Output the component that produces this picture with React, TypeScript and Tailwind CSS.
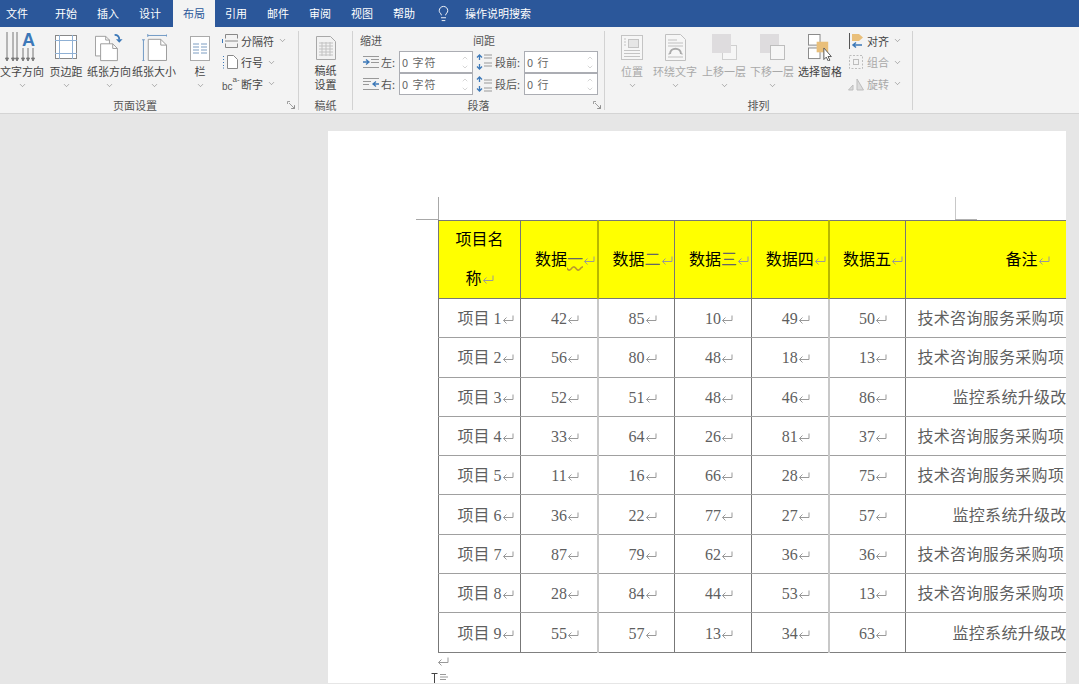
import { ChevronDown, ChevronUp, Lightbulb } from "lucide-react";
import type { ReactNode } from "react";

const tabs = ["开始", "插入", "设计"];
const tabsRight = ["引用", "邮件", "审阅", "视图", "帮助"];

const rows = [
  ["项目 1", "42", "85", "10", "49", "50", "技术咨询服务采购项目"],
  ["项目 2", "56", "80", "48", "18", "13", "技术咨询服务采购项目"],
  ["项目 3", "52", "51", "48", "46", "86", "监控系统升级改造"],
  ["项目 4", "33", "64", "26", "81", "37", "技术咨询服务采购项目"],
  ["项目 5", "11", "16", "66", "28", "75", "技术咨询服务采购项目"],
  ["项目 6", "36", "22", "77", "27", "57", "监控系统升级改造"],
  ["项目 7", "87", "79", "62", "36", "36", "技术咨询服务采购项目"],
  ["项目 8", "28", "84", "44", "53", "13", "技术咨询服务采购项目"],
  ["项目 9", "55", "57", "13", "34", "63", "监控系统升级改造"],
];

const Ret = () => (
  <svg viewBox="0 0 12 12" className="inline-block w-[12px] h-[12px] align-[-1px]" fill="none" stroke="#999" strokeWidth="1">
    <path d="M11 2.500v5H1.500M4.500 4.500l-3 3 3 3" />
  </svg>
);

const Chev = () => <ChevronDown className="w-[9px] h-[9px] text-[#777]" strokeWidth={1.5} />;

function BigBtn({ w, icon, label, disabled, noChev }: { w: string; icon: ReactNode; label: ReactNode; disabled?: boolean; noChev?: boolean }) {
  return (
    <div className={`${w} flex-none flex flex-col items-center ${disabled ? "text-[#a9a9a9]" : "text-[#444]"}`}>
      <div className="h-[32px] w-full flex items-end justify-center">{icon}</div>
      <div className="h-[16px] leading-[16px] whitespace-nowrap">{label}</div>
      {!noChev && <div className="h-[12px] flex items-center"><Chev /></div>}
    </div>
  );
}

function SmallBtn({ icon, label, disabled }: { icon: ReactNode; label: string; disabled?: boolean }) {
  return (
    <div className={`h-[21.5px] flex items-center gap-[1px] whitespace-nowrap ${disabled ? "text-[#a9a9a9]" : "text-[#444]"}`}>
      <div className="w-[18px] flex-none">{icon}</div>
      <span>{label}</span>
      <span className="ml-[3px]"><Chev /></span>
    </div>
  );
}

function Group({ className, label, labelClass, launcher, children }: { className: string; label: string; labelClass?: string; launcher?: boolean; children: ReactNode }) {
  return (
    <div className={`relative flex-none flex flex-col border-r border-[#d2d2d2] h-[79px] mt-[4px] ${className}`}>
      <div className="flex-1 flex min-h-0">{children}</div>
      <div className={`h-[17px] leading-[24px] text-center text-[#555] ${labelClass ?? ""}`}>{label}</div>
      {launcher && (
        <svg viewBox="0 0 8 8" className="absolute right-[3px] bottom-[1px] w-[8px] h-[8px]" fill="none" stroke="#8a8a8a">
          <path d="M.5 3V.5H3M7.500 5v2.500H5M2 2l5 5M4 7.500h3.500V4" strokeWidth=".8" />
        </svg>
      )}
    </div>
  );
}

const TextDir = () => (
  <svg viewBox="0 0 36 30" className="w-[36px] h-[30px] mb-[1px]" fill="none" stroke="#777">
    <path d="M3 0v26M9 0v26M13 0v26M19 16v10M24 16v10M29 16v10" />
    <path d="M1.500 26 3 29l1.500-3zM7.500 26 9 29l1.500-3zM11.500 26l1.500 3 1.500-3zM17.500 26l1.500 3 1.500-3zM22.500 26l1.500 3 1.500-3zM27.500 26l1.500 3 1.500-3z" fill="#777" />
    <text x="18" y="14" fontSize="18" fontWeight="700" fill="#3c78b8" stroke="none" fontFamily="Liberation Sans, sans-serif">A</text>
  </svg>
);
const Margins = () => (
  <svg viewBox="0 0 22 24" className="w-[22px] h-[24px] mb-[4px]" fill="#fff" stroke="#888">
    <rect x=".5" y=".5" width="21" height="23" />
    <path d="M4.500 0v24M17.500 0v24M0 5.500h22M0 18.500h22" stroke="#8fb0d4" />
  </svg>
);
const Orient = () => (
  <svg viewBox="0 0 30 30" className="w-[28px] h-[28px] mb-[1px]" fill="#fff" stroke="#999">
    <path d="M.5 2.500h11l4 4v17H.5z" />
    <path d="M6 10.500h13l5 5v13H6z" />
    <path d="M19 10.500v5h5M11.500 2.500v4h4" fill="none" />
    <path d="M21 1c3 0 5 2 5 5" fill="none" stroke="#3c78b8" strokeWidth="2" />
    <path d="M22.500 5.500 26 9.500l3.500-4z" fill="#3c78b8" stroke="none" />
  </svg>
);
const PaperSize = () => (
  <svg viewBox="0 0 26 28" className="w-[25px] h-[27px] mb-[2px]" fill="#fff" stroke="#999">
    <path d="M6.500 5.500h13l6 6v16h-19z" />
    <path d="M19.500 5.500v6h6" fill="none" />
    <path d="M6 1.500h20M6 0v3M26 0v3M1.500 6v22M0 6h3M0 28h3" fill="none" stroke="#6d97c4" />
  </svg>
);
const Columns = () => (
  <svg viewBox="0 0 20 25" className="w-[20px] h-[25px] mb-[2px]" fill="#fff" stroke="#aaa">
    <rect x=".5" y=".5" width="19" height="24" />
    <path d="M3 8h6M11 8h6M3 11h6M11 11h6M3 14h6M11 14h6M3 17h6M11 17h6" stroke="#7d9dc2" />
  </svg>
);
const Gaozhi = () => (
  <svg viewBox="0 0 20 24" className="w-[20px] h-[24px]" fill="#f2f2f2" stroke="#a8a8a8">
    <path d="M.5.500h14l5 5v18H.5z" />
    <path d="M3 7h14M3 10h14M3 13h14M3 16h14M3 19h14M6 6v14M10 6v14M14 6v14" stroke="#c2c2c2" />
  </svg>
);
const Position = () => (
  <svg viewBox="0 0 22 25" className="w-[22px] h-[25px] mb-[3px]" fill="#f6f6f6" stroke="#c4c4c4">
    <rect x=".5" y=".5" width="21" height="24" />
    <rect x="7.500" y="4.500" width="10" height="8" fill="#e6e6e6" />
    <path d="M3 15.500h16M3 18.500h16M3 21.500h16M3 4h2M3 7h2M3 10h2" />
  </svg>
);
const Wrap = () => (
  <svg viewBox="0 0 21 27" className="w-[21px] h-[27px] mb-[2px]" fill="#f6f6f6" stroke="#c0c0c0">
    <path d="M.5.500h15l5 5v21H.5z" />
    <path d="M3 6h9M3 9h15M3 12h15M3 23h15M3 20h2M16 20h2" />
    <path d="M5 20c0-7 11-7 11 0" fill="none" stroke="#aaa" strokeWidth="2" />
  </svg>
);
const LayerUp = () => (
  <svg viewBox="0 0 25 26" className="w-[25px] h-[26px] mb-[3px]" stroke="#cfcfcf">
    <rect x="10.500" y="11.500" width="14" height="14" fill="#f6f6f6" />
    <rect x="0" y="0" width="19" height="19" fill="#dedcde" stroke="none" />
  </svg>
);
const LayerDown = () => (
  <svg viewBox="0 0 25 26" className="w-[25px] h-[26px] mb-[3px]" stroke="#bdbdbd">
    <rect x="0" y="0" width="19" height="19" fill="#dedcde" stroke="none" />
    <rect x="10.500" y="11.500" width="14" height="14" fill="#f6f6f6" />
  </svg>
);
const Pane = () => (
  <svg viewBox="0 0 26 28" className="w-[25px] h-[27px] mb-[2px]" fill="#fff" stroke="#888">
    <rect x=".5" y=".5" width="12" height="11" />
    <rect x=".5" y="14.500" width="12" height="11" />
    <rect x="9" y="8" width="12" height="11" fill="#e9bf7a" stroke="none" />
    <path d="M16.500 14.500v12l2.500-2.500 2 4 1.800-.8-2-3.800h3.500z" fill="#fff" stroke="#555" />
  </svg>
);
const SepIcon = () => (
  <svg viewBox="0 0 16 14" className="w-[16px] h-[14px]" fill="none" stroke="#888">
    <path d="M3.500 4.500V.5h12v4M3.500 9.500v4h12v-4M3 7h13" />
    <path d="M.5 5v4" stroke="#3c78b8" />
  </svg>
);
const LineNum = () => (
  <svg viewBox="0 0 16 14" className="w-[16px] h-[14px]" fill="#fff" stroke="#888">
    <path d="M5.500.5h6l4 4v9h-10z" />
    <path d="M1 1.500h2M1 4.500h2M1 7.500h2M1 10.500h2M1 13h2" stroke="#3c78b8" strokeDasharray="1 1" />
  </svg>
);
const Hyphen = () => (
  <div className="flex items-start h-[16px] font-['Liberation_Sans',sans-serif] text-[#555]">
    <span className="mt-[6px] text-[10px] leading-[10px]">bc</span>
    <span className="text-[8px] leading-[8px]">a-</span>
  </div>
);
const Align = () => (
  <svg viewBox="0 0 16 16" className="w-[16px] h-[16px]">
    <path d="M1.500 0v16" stroke="#555" fill="none" />
    <path d="M4 1h7l4 3.500L11 8H4z" fill="#e9bf7a" />
    <path d="M14 12H6M8 9.500 5 12l3 2.500" fill="none" stroke="#3c78b8" strokeWidth="1.500" />
  </svg>
);
const GroupIcon = () => (
  <svg viewBox="0 0 16 16" className="w-[16px] h-[16px]" fill="none" stroke="#bdbdbd">
    <rect x="1.500" y="1.500" width="13" height="13" strokeDasharray="2 1.500" />
    <rect x="5.500" y="5.500" width="5" height="5" />
  </svg>
);
const Rotate = () => (
  <svg viewBox="0 0 16 14" className="w-[16px] h-[14px]" fill="none" stroke="#bdbdbd">
    <path d="M.5 13 5 8v5zM9 2l6.500 11H9z" fill="#dcdcdc" />
  </svg>
);

const IndentL = () => (
  <svg viewBox="0 0 16 12" className="w-[16px] h-[12px]" fill="none" stroke="#999">
    <path d="M0 .5h16M8 3.500h8M8 6.500h8M0 11.500h16" />
    <path d="M0 6h5M3 3.500 6 6 3 8.500" stroke="#3c78b8" strokeWidth="1.300" />
  </svg>
);
const IndentR = () => (
  <svg viewBox="0 0 16 12" className="w-[16px] h-[12px]" fill="none" stroke="#999">
    <path d="M0 .5h16M0 3.500h8M0 6.500h6M0 11.500h16" />
    <path d="M16 6h-5M13 3.500 10 6l3 2.500" stroke="#3c78b8" strokeWidth="1.300" />
  </svg>
);
const SpaceIcon = ({ flip }: { flip?: boolean }) => (
  <svg viewBox="0 0 16 16" className="w-[16px] h-[16px]" fill="none" stroke="#999">
    <path d={flip ? "M8 4h8M8 7h8M8 12h8M8 15h8" : "M8 1h8M8 4h8M8 9h8M8 12h8"} />
    <path d="M3.500 1v5M1 3.500 3.500 1 6 3.500M3.500 15v-5M1 12.500 3.500 15 6 12.500" stroke="#3c78b8" strokeWidth="1.300" />
  </svg>
);

function Spin({ value, w }: { value: string; w: string }) {
  return (
    <div className={`${w} h-[22px] flex items-center justify-between bg-white border border-[#abadb3] pl-[2px] pr-[3px] text-[#666]`}>
      <span className="tracking-[1px]">{value}</span>
      <div className="flex flex-col text-[#999]">
        <ChevronUp className="w-[8px] h-[8px]" strokeWidth={1.2} />
        <ChevronDown className="w-[8px] h-[8px] mt-[1px]" strokeWidth={1.2} />
      </div>
    </div>
  );
}

function SpinRow({ icon, label, value, labelW, w }: { icon: ReactNode; label: string; value: string; labelW: string; w: string }) {
  return (
    <div className="flex items-center h-[22px]">
      <div className={`flex items-center justify-between ${labelW} text-[#555] pr-[4px]`}>
        {icon}
        <span>{label}</span>
      </div>
      <Spin value={value} w={w} />
    </div>
  );
}

// the lines at 598 and 829 come out paler and wider in the shot
const pale = [false, true, false, false, true, false];

export default function App() {
  return (
    <div className="w-[1079px] h-[684px] overflow-hidden flex flex-col text-[11px] font-['Noto_Sans_CJK_SC',sans-serif] bg-[#e6e6e6]">
      <div className="h-[27px] flex-none bg-[#2b579a] flex items-stretch text-white">
        <div className="w-[45px] pl-[6px] flex items-center">文件</div>
        {tabs.map((t) => (
          <div key={t} className="w-[42px] flex items-center justify-center">{t}</div>
        ))}
        <div className="w-[42px] ml-[2px] bg-[#f3f3f3] text-[#2b579a] flex items-center justify-center">布局</div>
        {tabsRight.map((t) => (
          <div key={t} className="w-[42px] flex items-center justify-center">{t}</div>
        ))}
        <div className="ml-[10px] flex items-center">
          <Lightbulb className="w-[17px] h-[17px]" strokeWidth={1.3} />
          <span className="ml-[13px]">操作说明搜索</span>
        </div>
      </div>

      <div className="h-[87px] flex-none bg-[#f3f3f3] border-b border-[#d4d4d4] flex items-start">
        <Group className="w-[299px]" label="页面设置" labelClass="pr-[28px]" launcher>
          <BigBtn w="w-[44px]" icon={<TextDir />} label="文字方向" />
          <BigBtn w="w-[44px]" icon={<Margins />} label="页边距" />
          <BigBtn w="w-[42px]" icon={<Orient />} label="纸张方向" />
          <BigBtn w="w-[48px]" icon={<PaperSize />} label="纸张大小" />
          <BigBtn w="w-[44px]" icon={<Columns />} label="栏" />
          <div className="-mt-[1px]">
            <SmallBtn icon={<SepIcon />} label="分隔符" />
            <SmallBtn icon={<LineNum />} label="行号" />
            <SmallBtn icon={<Hyphen />} label="断字" />
          </div>
        </Group>
        <Group className="w-[54px]" label="稿纸">
          <div className="w-full flex flex-col items-center text-[#444]">
            <div className="h-[29px] flex items-end"><Gaozhi /></div>
            <div className="mt-[3px] leading-[14px] text-center">稿纸<br />设置</div>
          </div>
        </Group>
        <Group className="w-[252px]" label="段落" launcher>
          <div className="pl-[7px] w-full">
            <div className="flex h-[18px] mb-[2px] items-center text-[#555]">
              <span className="w-[113px]">缩进</span>
              <span>间距</span>
            </div>
            <div className="flex">
              <div>
                <SpinRow icon={<IndentL />} label="左:" value="0 字符" labelW="w-[39px] pl-[3px]" w="w-[74px]" />
                <SpinRow icon={<IndentR />} label="右:" value="0 字符" labelW="w-[39px] pl-[3px]" w="w-[74px]" />
              </div>
              <div>
                <SpinRow icon={<SpaceIcon />} label="段前:" value="0 行" labelW="w-[51px] pl-[3px]" w="w-[74px]" />
                <SpinRow icon={<SpaceIcon flip />} label="段后:" value="0 行" labelW="w-[51px] pl-[3px]" w="w-[74px]" />
              </div>
            </div>
          </div>
        </Group>
        <Group className="w-[308px]" label="排列">
          <div className="w-[5px] flex-none" />
          <BigBtn w="w-[44px]" icon={<Position />} label="位置" disabled />
          <BigBtn w="w-[42px]" icon={<Wrap />} label="环绕文字" disabled />
          <BigBtn w="w-[56px]" icon={<LayerUp />} label="上移一层" disabled />
          <BigBtn w="w-[40px]" icon={<LayerDown />} label="下移一层" disabled />
          <BigBtn w="w-[56px]" icon={<Pane />} label="选择窗格" noChev />
          <div className="-mt-[1px]">
            <SmallBtn icon={<Align />} label="对齐" />
            <SmallBtn icon={<GroupIcon />} label="组合" disabled />
            <SmallBtn icon={<Rotate />} label="旋转" disabled />
          </div>
        </Group>
      </div>

      <div className="flex-1 min-h-0 pt-[17px] pb-[1px] pl-[328px]">
        <div className="relative w-[738px] h-full bg-white pl-[110px] pt-[89px] overflow-hidden">
          <span className="absolute left-[110px] top-[66px] h-[23px] w-px bg-[#a8a8a8]" />
          <span className="absolute left-[88px] top-[88px] w-[22px] h-px bg-[#a8a8a8]" />
          <span className="absolute left-[627px] top-[66px] h-[22px] w-px bg-[#c8c8c8]" />
          <span className="absolute left-[627px] top-[88px] w-[22px] h-px bg-[#b0b0b0]" />

          <table className="table-fixed w-[712px] border-collapse font-['Liberation_Serif','Noto_Sans_CJK_SC',serif] text-[16px] text-[#5f5f5f]">
            <colgroup>
              <col className="w-[82px]" />
              <col className="w-[77.5px]" />
              <col className="w-[76.5px]" />
              <col className="w-[77px]" />
              <col className="w-[77px]" />
              <col className="w-[76.5px]" />
              <col className="w-[245.500px]" />
            </colgroup>
            <thead>
              <tr className="h-[77px] bg-[#ffff00] text-black">
                <th className="border border-[#777] font-normal leading-[38.5px]">项目名<br />称<Ret /></th>
                {["一", "二", "三", "四", "五"].map((d, i) => (
                  <th key={d} className={`border-y border-y-[#777] border-l ${pale[i + 1] ? "border-r-2 border-r-[#b8b800]" : "border-r border-r-[#777]"} border-l-[#777] font-normal pl-[12px] whitespace-nowrap`}>
                    数据
                    <span className={i === 0 ? "text-[#666] underline decoration-wavy decoration-[#b8972c]" : i < 3 ? "text-[#666]" : ""}>{d}</span>
                    <Ret />
                  </th>
                ))}
                <th className="border border-[#777] font-normal pl-[100px] text-left whitespace-nowrap">备注<Ret /></th>
              </tr>
            </thead>
            <tbody>
              {rows.map((r, ri) => (
                <tr key={r[0]} className="h-[39.3px]">
                  <td className={`border border-x-[#777] border-t-[#a0a0a0] ${ri === 8 ? "border-b-[#808080]" : "border-b-[#a0a0a0]"} pl-[12px] pt-[2px] text-center whitespace-nowrap`}>{r[0]}<Ret /></td>
                  {r.slice(1, 6).map((v, i) => (
                    <td key={i} className={`border-y border-t-[#a0a0a0] ${ri === 8 ? "border-b-[#808080]" : "border-b-[#a0a0a0]"} border-l border-l-[#777] ${pale[i + 1] ? "border-r-2 border-r-[#c8c8c8]" : "border-r border-r-[#777]"} pl-[12px] pt-[2px] text-center whitespace-nowrap`}>{v}<Ret /></td>
                  ))}
                  <td className={`border border-x-[#777] border-t-[#a0a0a0] ${ri === 8 ? "border-b-[#808080]" : "border-b-[#a0a0a0]"} pt-[2px] tracking-[0.3px] whitespace-nowrap ${r[6].startsWith("监控") ? "pl-[47px]" : "pl-[12px]"}`}>{r[6]}<Ret /></td>
                </tr>
              ))}
            </tbody>
          </table>

          <div className="mt-[2px] -ml-[1px] leading-none"><Ret /></div>
          <svg viewBox="0 0 8 6" className="absolute left-[112px] top-[543px] w-[8px] h-[6px]" fill="none" stroke="#999">
            <path d="M0 .5h6M0 3h8M0 5.500h6" />
          </svg>
          <svg viewBox="0 0 7 12" className="absolute left-[103px] top-[542px] w-[7px] h-[12px]" fill="none" stroke="#444">
            <path d="M.5.500h6M3.500.5v11M.5 11.500h6" />
          </svg>
        </div>
      </div>
    </div>
  );
}
